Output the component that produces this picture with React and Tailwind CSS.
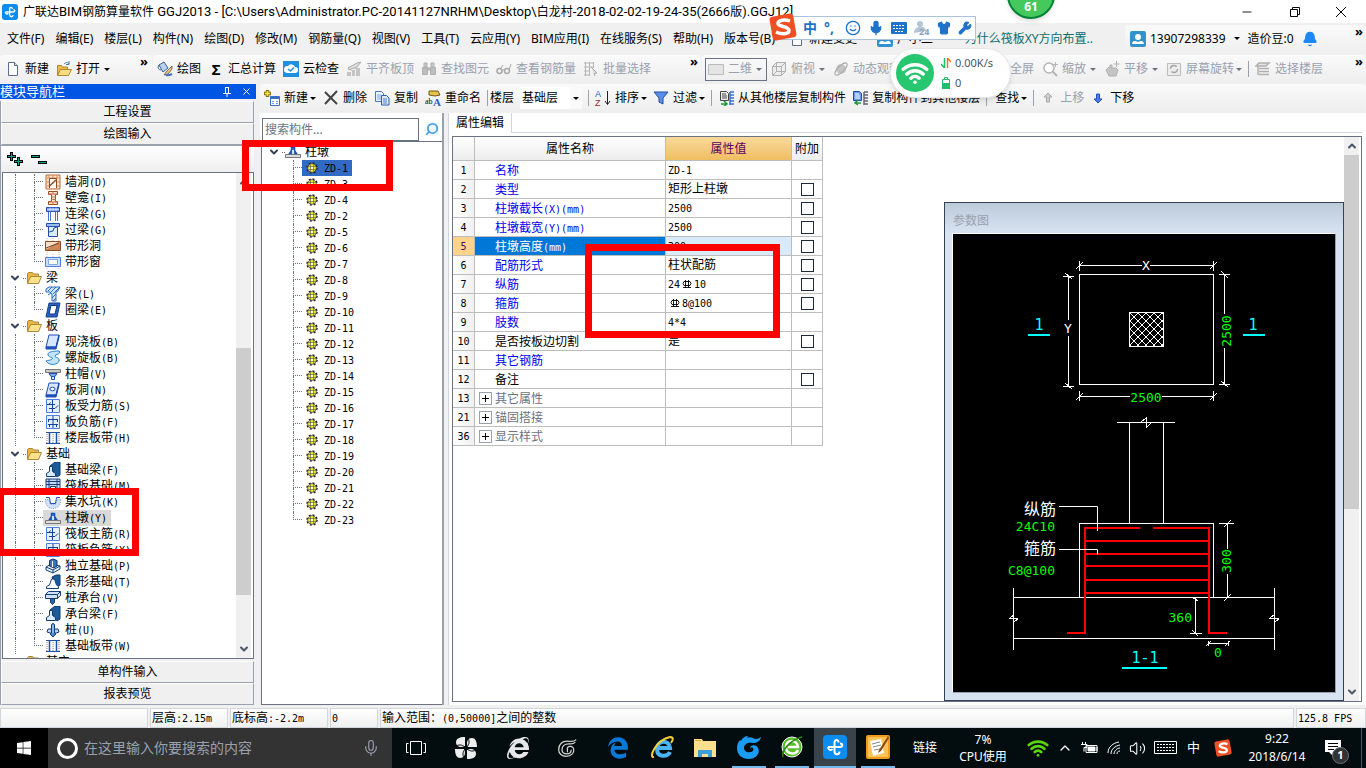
import React from 'react';
import { FaEdgeLegacy, FaInternetExplorer, FaWindows } from 'react-icons/fa';
import { Mic, Shirt, Wrench, Smile, Wifi, ChevronUp, ChevronDown, Minus, X, Bell, Volume2, Search } from 'lucide-react';

const navTree = [
  { label: '墙洞(D)', icon: 'wallHole' },
  { label: '壁龛(I)', icon: 'niche' },
  { label: '连梁(G)', icon: 'linkBeam' },
  { label: '过梁(G)', icon: 'lintel' },
  { label: '带形洞', icon: 'stripHole' },
  { label: '带形窗', icon: 'stripWindow', last: true },
  { label: '梁', group: true },
  { label: '梁(L)', icon: 'beam' },
  { label: '圈梁(E)', icon: 'ringBeam', last: true },
  { label: '板', group: true },
  { label: '现浇板(B)', icon: 'slab' },
  { label: '螺旋板(B)', icon: 'spiral' },
  { label: '柱帽(V)', icon: 'cap' },
  { label: '板洞(N)', icon: 'slabHole' },
  { label: '板受力筋(S)', icon: 'mainBar' },
  { label: '板负筋(F)', icon: 'negBar' },
  { label: '楼层板带(H)', icon: 'band', last: true },
  { label: '基础', group: true },
  { label: '基础梁(F)', icon: 'footBeam' },
  { label: '筏板基础(M)', icon: 'raft' },
  { label: '集水坑(K)', icon: 'sump' },
  { label: '柱墩(Y)', icon: 'pier', selected: true },
  { label: '筏板主筋(R)', icon: 'mainBar' },
  { label: '筏板负筋(X)', icon: 'negBar' },
  { label: '独立基础(P)', icon: 'isolated' },
  { label: '条形基础(T)', icon: 'stripFoot' },
  { label: '桩承台(V)', icon: 'pileCap' },
  { label: '承台梁(F)', icon: 'footBeam' },
  { label: '桩(U)', icon: 'pile' },
  { label: '基础板带(W)', icon: 'band', last: true },
  { label: '其它', group: true }
];

const components = [1, 3, 4, 2, 5, 6, 7, 8, 9, 10, 11, 12, 13, 14, 15, 16, 17, 18, 19, 20, 21, 22, 23];

const properties = [
  { no: 1, name: '名称', value: 'ZD-1' },
  { no: 2, name: '类型', value: '矩形上柱墩', check: true },
  { no: 3, name: '柱墩截长(X)(mm)', value: '2500', check: true },
  { no: 4, name: '柱墩截宽(Y)(mm)', value: '2500', check: true },
  { no: 5, name: '柱墩高度(mm)', value: '300', check: true, active: true },
  { no: 6, name: '配筋形式', value: '柱状配筋', check: true },
  { no: 7, name: '纵筋', value: '24', bar: '10', check: true },
  { no: 8, name: '箍筋', value: '', bar: '8@100', check: true },
  { no: 9, name: '肢数', value: '4*4' },
  { no: 10, name: '是否按板边切割', value: '是', check: true, tone: 'text-black' },
  { no: 11, name: '其它钢筋', value: '' },
  { no: 12, name: '备注', value: '', check: true, tone: 'text-black' },
  { no: 13, name: '其它属性', value: '', expand: true, tone: 'text-gray-500' },
  { no: 21, name: '锚固搭接', value: '', expand: true, tone: 'text-gray-500' },
  { no: 36, name: '显示样式', value: '', expand: true, tone: 'text-gray-500' }
];

const menus = ['文件(F)', '编辑(E)', '楼层(L)', '构件(N)', '绘图(D)', '修改(M)', '钢筋量(Q)', '视图(V)', '工具(T)', '云应用(Y)', 'BIM应用(I)', '在线服务(S)', '帮助(H)', '版本号(B)'];

const B = '#1b4fb5';

const glyphs = {
  wallHole: <><path d="M1 1h14v14H1z" fill="#fbe3cf" stroke="#b96a3a" /><path d="M1 4h14M1 8h3M12 8h3M1 12h3M12 12h3M4 1v3M8 1v3M12 1v3" stroke="#d98a55" /><path d="M4.500 14V4.500h7V14" fill="#fff" stroke="#8a4a22" /><path d="M4.500 12l6.500-6" stroke="#8a4a22" strokeWidth="1.500" /></>,
  niche: <><path d="M3.500 1.500h9v3h-2v7h2v3h-9v-3h3v-7h-3z" fill="#fde6d2" stroke="#9c4a1c" /><path d="M4 4h8M6 7h5M6 9.500h5M4 12h8M8 1.500v3M8 12v3" stroke="#c2703c" /></>,
  linkBeam: <><path d="M1.500 1.500h13v4h-13z" fill="#7ea6ee" stroke={B} /><path d="M2 3.500h12M5 1.500v4M8 1.500v4M11 1.500v4" stroke="#dfeaff" strokeWidth=".7" /><path d="M3.500 6v9M5.500 6v9M10.500 6v9M12.500 6v9" stroke={B} strokeWidth=".8" /></>,
  lintel: <><path d="M1.500 1.500h13v3h-13z" fill="#9cbcf5" stroke={B} /><path d="M3.500 4.500h9v10h-9z" fill="#dce9ff" stroke={B} /><path d="M4 10l4-1 1-3 3-1" stroke={B} fill="none" /></>,
  stripHole: <><path d="M2 0v16M8 0v3M14 0v16" stroke="#f2a8a0" strokeDasharray="1 1" /><path d="M.5 3.500h15v9H.5z" fill="#f6dfc9" stroke="#8a4a22" /><path d="M1 11c5-1 8-6 14-7v8H1z" fill="#c98a5a" /><path d="M1 10l13-5" stroke="#7b3f1c" /></>,
  stripWindow: <><path d="M2 0v16M8 0v3M14 0v16" stroke="#f2a8a0" strokeDasharray="1 1" /><path d="M.5 3.500h15v9H.5z" fill="#cddffb" stroke="#4a7be0" /><path d="M3.500 5.500h9v5h-9z" fill="#fff" stroke="#7ea6ee" /></>,
  beam: <><path d="M1 3l3-2h11l-2 4-2 1v9H7V8L5 6H1z" fill="#cfe6ff" stroke="#2c6cc0" /><path d="M3 5l4-4M6 6l5-5M8 8l7-7M7 12l4-4M8 15l3-3M3 9l3-2" stroke="#2c6cc0" /></>,
  ringBeam: <><path d="M4 1h11l-3 14H1z" fill="#2b62c4" stroke="#153f8c" /><path d="M6 3.500h6l-2 8.500H4z" fill="#fff" stroke="#0e347c" /></>,
  slab: <><path d="M4 1h10l-3 12H1z" fill="#d7e7ff" stroke={B} /><path d="M1 13v2h10l3-12V1l-3 12z" fill="#2457ba" stroke={B} /></>,
  spiral: <path d="M14 1C8 1 2 2 3 5s6 2 4 4-6 1-6 2c3 5 12 4 13 0s-4-3-4-5 4-1 5-4z" fill="#bfe4fb" stroke="#2a7fc6" />,
  cap: <><path d="M.5 3.500h15v3H.5z" fill="#c9c9c9" stroke="#777" /><path d="M4 7.500h8l-2 3H6z" fill="#7fa4ec" stroke={B} /><path d="M6.500 10.500h3v3h-3z" fill="#dfeaff" stroke={B} /></>,
  slabHole: <><path d="M4 1h10l-3 12H1z" fill="#d7e7ff" stroke={B} /><path d="M1 13v2h10l3-12V1l-3 12z" fill="#2457ba" stroke={B} /><ellipse cx="7.500" cy="7" rx="2.600" ry="1.800" fill="#fff" stroke={B} /></>,
  mainBar: <><path d="M1.500 1.500h13v13h-13z" fill="#e4efff" stroke="#4a80e0" /><path d="M7.500 2v12M2 6.500h8M13 7.500l-3 3H4M5.500 4.500L4 6.500" stroke="#143f9e" fill="none" /></>,
  negBar: <><path d="M1.500 1.500h13v13h-13z" fill="#e4efff" stroke="#4a80e0" /><path d="M3 5.500h10M3 10.500h10M8 2v12M3.500 5v3M12.500 5v3M4.500 10v3M11.500 10v3" stroke="#143f9e" fill="none" /></>,
  band: <><path d="M1 2.500h14M1 13.500h14" stroke="#1b4fb5" /><path d="M4.500 3v10M11.500 3v10" stroke="#1b4fb5" strokeWidth="1.500" /><path d="M2 4v9M8 4v9M14 4v9" stroke="#888" strokeDasharray="1 1" /></>,
  footBeam: <><path d="M5 4l5-4h5v13l-3 2z" fill="#1d5a9c" stroke="#0f3c70" /><path d="M1.500 14.500v-3l3-2v-5h3v5l3 2v3z" fill="#d9ecff" stroke="#0f3c70" /></>,
  raft: <><path d="M1 1h14v14H1z" fill="#c4daf8" stroke="#173f7a" /><path d="M1 3.500h14M1 6.500h14M4 1v14M12 1v14" stroke="#173f7a" /><path d="M5.500 8.500h5v6h-5z" fill="#fff" stroke="#173f7a" /></>,
  sump: <><path d="M0 5.500h4l1.500 5h5L12 5.500h4c0 5-3 9-8 9S0 10 0 5.500z" fill="#cfe1fb" stroke="#7ca0d8" strokeDasharray="1 1" /><path d="M1 3.500h3.500l1 6h5l1-6H15" fill="none" stroke={B} /></>,
  pier: <><path d="M6.500 3.500h3v3l2 3h-7l2-3z" fill="#3f7be0" stroke={B} strokeWidth="1.500" /><path d="M7 6h2v4H7z" fill="#cfe1fb" /><path d="M.5 10.500h15v3H.5z" fill="#ddd" stroke="#777" /></>,
  isolated: <><path d="M1 9l5-3 9 2v3l-7 4-7-3z" fill="#e6f2ff" stroke="#123f7c" /><path d="M1 9l7 3 7-4M8 12v3" stroke="#123f7c" fill="none" /><path d="M4.500 2.500L8 1l4 1.500V8l-3 2-4.500-2z" fill="#3a74b4" stroke="#0f376c" /><path d="M7.500 3v6" stroke="#fff" /></>,
  stripFoot: <><path d="M7 3l4-2h4v10l-4 3z" fill="#1d5a9c" stroke="#0f3c70" /><path d="M1.500 14.500v-2l3-1.500 2-6h3l2 6 2 1.500v2z" fill="#fff" stroke="#123f7c" /></>,
  pileCap: <><path d="M.5 4.500l3-3h12v4l-3 3H.5z" fill="#cfe1fb" stroke="#123f7c" /><path d="M.5 4.500h12v4M12.500 4.500l3-3" stroke="#123f7c" fill="none" /><path d="M5.500 8.500h4v4l-2 2-2-2z" fill="#2b62a8" stroke="#123f7c" /></>,
  pile: <><path d="M3 7h10l1 3-3 1H5l-3-1z" fill="#b9d6f5" stroke="#123f7c" /><path d="M6.500 3c0-2 3-2 3 0v8l1.500 1-3 3-3-3 1.500-1z" fill="#4a86cc" stroke="#123f7c" /><path d="M8 3v8" stroke="#fff" strokeWidth=".8" /></>,
  folder: <><path d="M1.500 13.500v-10l1-1h4l1 1.500h5v3" fill="#e8b84c" stroke="#a8883a" /><path d="M1.500 13.500l3-7h11l-3 7z" fill="#fde08a" stroke="#a8883a" /></>,
  newFile: <><path d="M3.500 1.500h6l3 3v10h-9z" fill="#fff" stroke="#5a6d8c" /><path d="M9.500 1.500v3h3" fill="#cddcf0" stroke="#5a6d8c" /></>,
  openFile: <><path d="M1.500 14.500v-10h4l1 1.500h5v2" fill="#e8b84c" stroke="#b08a30" /><path d="M1.500 14.500l3-6h11l-3 6z" fill="#fbdc83" stroke="#b08a30" /><path d="M8 3c2-2 4-2 5 0M13 0v3.500h-3" fill="none" stroke="#4a76b8" /></>,
  paint: <><path d="M2 4l5-3 4 6-5 4z" fill="#bdd2f0" stroke="#3a5f9a" /><path d="M2 4c-2 3 0 5 2 5" fill="none" stroke="#3a5f9a" /><path d="M15 5l-5 5-3 4 4-1 4-5z" fill="#f5c95a" stroke="#6d6a7a" /><path d="M9 14c2 1 4 0 6-1" stroke="#3c6fd0" strokeWidth="2" /></>,
  cloud: <><path d="M0 0h16v16H0z" fill="#1f8fe0" /><path d="M4 12h8a3 3 0 000-6 4 4 0 00-7-1 3.500 3.500 0 00-1 7z" fill="#fff" /><path d="M5 8l2.500 2L11 6.500" stroke="#1f8fe0" strokeWidth="1.500" fill="none" /></>,
  align: <><path d="M2 7l9-5 4-1-4 5-8 3z" fill="#ddd" stroke="#aaa" /><path d="M1 11h4V9h4V7h5v8H1z" fill="#c4c4c4" /><path d="M5.500 10v5M9.500 8v7" stroke="#f0f0f0" /></>,
  find: <><path d="M3 2h3v4H3zM10 2h3v4h-3z" fill="#c8c8c8" stroke="#b0b0b0" /><path d="M1.500 6.500h5v7h-5zM9.500 6.500h5v7h-5zM6 7h4v2H6z" fill="#bdbdbd" stroke="#b0b0b0" /></>,
  glasses: <><circle cx="3.500" cy="10" r="2.500" fill="none" stroke="#aaa" strokeWidth="1.500" /><circle cx="11" cy="10" r="2.500" fill="none" stroke="#aaa" strokeWidth="1.500" /><path d="M6 9h3M13 9l2-6M5 7l2-3" stroke="#aaa" /></>,
  batch: <><path d="M1 2h10M1 6h10M1 10h6M1 14h6M2.500 1v14M6.500 1v14M10.500 1v6" stroke="#b5b5b5" /><path d="M8 6l6 6-3 .5 1 2.500" fill="#ddd" stroke="#aaa" /></>,
  rect2d: <path d="M.5 3.500h15v10H.5z" fill="#e4e4e4" stroke="#bbb" />,
  cube: <path d="M1.500 5.500l4-4h9v9l-4 4h-9zM1.500 5.500h9v9M10.500 5.500l4-4M5.500 1.500v9h9M5.500 10.500l-4 4" fill="#ececec" stroke="#b0b0b0" />,
  orbit: <><circle cx="8" cy="8" r="5" fill="#c4c4c4" /><ellipse cx="8" cy="8" rx="8" ry="3" transform="rotate(-45 8 8)" fill="none" stroke="#aaa" /></>,
  zoom: <><circle cx="7" cy="7" r="5" fill="#fff" stroke="#b5b5b5" strokeWidth="1.500" /><path d="M10.500 10.500L15 15" stroke="#b5b5b5" strokeWidth="2" /><path d="M13.500 1v5M11 3.500h5" stroke="#b5b5b5" /></>,
  pan: <><path d="M2 9l3-3 1 1V4h2v3h4l2 2-2 6H5z" fill="#c4c4c4" stroke="#b0b0b0" /><path d="M12.500 0v6M9.500 3h6" stroke="#b0b0b0" /></>,
  rotate: <><path d="M1.500 2.500h13v12h-13z" fill="#ececec" stroke="#bbb" /><circle cx="8" cy="8" r="3.500" fill="none" stroke="#a5a5a5" strokeWidth="1.500" strokeDasharray="8 3" /></>,
  floors: <path d="M4 2h10l-3 3H1zM4 7.500h10M4 10.500h10M4 13.500h10M3 5v9" fill="#e4e4e4" stroke="#b0b0b0" strokeWidth="1.500" />,
  newComp: <><path d="M3.500 0v7M0 3.500h7" stroke="#8a7414" strokeWidth="3.500" /><path d="M3.500 1v5M1 3.500h5" stroke="#ffe14a" strokeWidth="1.500" /><path d="M6.500 6.500h9v9h-9z" fill="#fff" stroke="#3a70c4" /><path d="M7 8h8" stroke="#3a70c4" strokeWidth="2" /><path d="M8 11.500h2M12 11.500h2M8 13.500h2M12 13.500h2" stroke="#6f9be0" /></>,
  del: <path d="M2 2l12 12M14 1L2 14" stroke="#444" strokeWidth="2" />,
  copy: <><path d="M1.500 1.500h6l2 2v8h-8z" fill="#eaf2ff" stroke="#4a76c0" /><path d="M3 5h4M3 7h4M3 9h4" stroke="#7fa4dc" /><path d="M7.500 5.500h5l2.500 2.500v7H7.500z" fill="#dceaff" stroke="#2f5fb4" /><path d="M9 9h4M9 11h4M9 13h4" stroke="#4a80d8" /></>,
  filter: <path d="M1 2h14L10 8v6l-4-2V8z" fill="#5a8fe8" stroke="#1f4fa8" />,
  fromFloor: <><path d="M2.500 1.500h6l2 2v7h-8z" fill="#eee" stroke="#444" /><path d="M4 4h4M4 6h5M4 8h5" stroke="#444" /><path d="M12 2h4M12 5h4M12 8h4M12 11h4M12 14h4M12 2v13" stroke="#3a70d0" strokeWidth="1.500" /><path d="M3 14h5M6 11l3 3-3 2" stroke="#1b9a3a" strokeWidth="1.500" fill="none" /></>,
  toFloor: <><path d="M1.500 1.500h6l2 2v7h-8z" fill="#6b9bf0" stroke="#234c9c" /><path d="M3 4h4M3 6h5M3 8h5" stroke="#fff" /><path d="M12 2h4M12 5h4M12 8h4M12 11h4M12 14h4M12 2v13" stroke="#667" strokeWidth="1.500" /><path d="M9 13H4M6 10l-3 3 3 2" stroke="#1b9a3a" strokeWidth="1.500" fill="none" /></>,
  up: <path d="M8 3l4 4H9.500v5h-3V7H4z" fill="#ccc" stroke="#aaa" />,
  down: <path d="M8 13l4-4H9.500V4h-3v5H4z" fill="#4a7df0" stroke="#2450b8" />,
  gear: <><circle cx="8" cy="8" r="5" stroke="#222" strokeWidth="1.500" strokeDasharray="1.960 1.960" /><circle cx="8" cy="8" r="4.300" fill="#f6f02a" stroke="#444" strokeWidth=".8" /><path d="M6.500 4v8M9.500 4v8M4 6.500h8M4 9.500h8" stroke="#555" strokeWidth=".6" /><path d="M7 7h2v2H7z" fill="#fff" /></>,
  user: <><rect width="16" height="16" rx="2" fill="#3292cc" /><circle cx="8" cy="6" r="3" fill="#fff" /><path d="M2 13c1-4 3-3 6-2 3-1 5-2 6 2z" fill="#fff" /></>
};

const Ico = ({ name, className = 'h-4 w-4' }) => (
  <svg viewBox="0 0 16 16" fill="none" className={`shrink-0 ${className}`} aria-hidden="true">{glyphs[name]}</svg>
);

// Latin runs get their own face and size, CJK keeps the surrounding one
const Mixed = ({ text, latin }) => (
  <span className="whitespace-pre">
    {text.split(/([\x20-\x7e]+)/).filter(Boolean).map((part, i) =>
      /[\x20-\x7e]/.test(part) ? <span key={i} className={latin}>{part}</span> : part
    )}
  </span>
);

const Song = ({ text }) => <Mixed text={text} latin="font-['DejaVu_Sans_Mono',monospace] text-[10px] leading-none" />;

const Caret = ({ className = 'text-black' }) => (
  <svg viewBox="0 0 6 3" className={`h-[3px] w-[6px] shrink-0 ${className}`} fill="currentColor" aria-hidden="true"><path d="M0 0h6L3 3z" /></svg>
);

const ToolButton = ({ icon, label, caret, dim, tight, children }) => (
  <button type="button" className={`flex shrink-0 items-center gap-1 whitespace-nowrap ${dim ? 'text-gray-400' : 'text-black'}`}>
    {children || (icon && <Ico name={icon} />)}
    {label}
    {caret && <Caret className={`${tight ? '-ml-0.5' : ''} ${dim ? 'text-gray-500' : 'text-black'}`} />}
  </button>
);

const More = () => <button type="button" className="mb-4 text-[13px] leading-4 font-bold text-black" aria-label="更多">»</button>;
const Sep = () => <span className="h-4 w-px shrink-0 bg-gray-400" />;

const AppLogo = ({ className }) => (
  <svg viewBox="0 0 24 24" className={className} fill="none" aria-hidden="true">
    <rect width="24" height="24" rx="4" fill="#0a8cf0" />
    <path d="M15.500 7.500c0-3-4-3.500-4 0v9c0 3.500 5 3.500 5 0M5 12h12c3 0 3-3.500 0-3.500M5 12c0 3 3 4 4.500 2" stroke="#fff" strokeWidth="2" />
  </svg>
);

const SogouLogo = ({ className }) => (
  <svg viewBox="0 0 28 28" className={className} aria-hidden="true">
    <rect x="2" y="2" width="24" height="24" rx="3" fill="#f04e23" transform="rotate(-10 14 14)" />
    <path d="M21 8c-5-2-12-1-12 2.500S20 13 20 17.500 11 21 7 19" fill="none" stroke="#fff" strokeWidth="3.500" />
  </svg>
);

function TitleBar() {
  return (
    <header className="flex h-[23px] shrink-0 items-center bg-white pl-0.5">
      <AppLogo className="h-4 w-4" />
      <h1 className="ml-[5px] flex-1 text-xs"><Mixed text="广联达BIM钢筋算量软件 GGJ2013 - [C:\Users\Administrator.PC-20141127NRHM\Desktop\白龙村-2018-02-02-19-24-35(2666版).GGJ12]" latin="font-['Roboto',sans-serif] text-[13px] leading-none" /></h1>
      <div className="flex items-center gap-9 pr-5">
        <button type="button" aria-label="最小化"><Minus className="h-[14px] w-[14px]" strokeWidth={1.500} /></button>
        <button type="button" aria-label="还原">
          <svg viewBox="0 0 10 10" className="h-[10px] w-[10px]" fill="none" stroke="#000"><path d="M.5 2.500h7v7h-7zM2.500 2.500v-2h7v7h-2" /></svg>
        </button>
        <button type="button" aria-label="关闭">
          <svg viewBox="0 0 10 10" className="h-[10px] w-[10px]" fill="none" stroke="#000"><path d="M0 0l10 10M10 0L0 10" /></svg>
        </button>
      </div>
    </header>
  );
}

function MenuBar() {
  return (
    <div className="flex h-[31px] shrink-0 items-center bg-[#f0f0f0] text-xs">
      <nav className="flex items-center gap-[11px] pl-[7px]">
        {menus.map((m) => <button type="button" key={m} className="whitespace-nowrap">{m}</button>)}
      </nav>
      <div className="ml-3.5 flex h-full flex-1 items-center justify-between">
        <div className="flex items-center gap-5">
          <ToolButton icon="newFile" label="新建变更" />
          <ToolButton icon="user" label="广小二" />
        </div>
        <a href="#help" className="pr-8 whitespace-nowrap text-[#0a6e6e]">为什么筏板XY方向布置..</a>
      </div>
      <div className="flex h-7 w-[241px] items-center rounded bg-linear-to-b from-[#fafafa] to-[#efefef] pr-[3px] pl-[5px]">
        <button type="button" className="flex items-center gap-1"><Ico name="user" />13907298339<span className="ml-1"><Caret /></span></button>
        <span className="ml-2">造价豆:0</span>
        <Bell className="ml-2 h-4 w-4 fill-[#1e88f5] text-[#1e88f5]" />
        <span className="ml-auto"><More /></span>
      </div>
    </div>
  );
}

const strip = 'flex h-7 items-center rounded bg-linear-to-b from-[#fafafa] to-[#eeeeee]';

function MainToolbar() {
  return (
    <div className="flex h-[30px] shrink-0 items-center gap-px bg-[#f0f0f0] text-xs">
      <div className={`${strip} w-[152px] gap-[7px] pr-1 pl-[5px]`}>
        <ToolButton icon="newFile" label="新建" />
        <ToolButton icon="openFile" label="打开" caret />
        <span className="ml-auto"><More /></span>
      </div>
      <div className={`${strip} w-[548px] gap-[7px] pr-[3px] pl-1`}>
        <ToolButton icon="paint" label="绘图" />
        <ToolButton label="汇总计算"><span className="w-4 text-center text-[15px] font-bold">Σ</span></ToolButton>
        <ToolButton icon="cloud" label="云检查" />
        <ToolButton icon="align" label="平齐板顶" dim />
        <ToolButton icon="find" label="查找图元" dim />
        <ToolButton icon="glasses" label="查看钢筋量" dim />
        <ToolButton icon="batch" label="批量选择" dim />
        <span className="ml-auto"><More /></span>
      </div>
      <div className={`${strip} flex-1 gap-2 pr-[3px] pl-[3px]`}>
        <label className="-mr-1 flex h-[23px] w-[62px] shrink-0 items-center border border-gray-500 pr-1 pl-0.5 text-gray-400">
          <Ico name="rect2d" />
          <select aria-label="视图模式" className="ml-1 w-[31px] appearance-none bg-transparent"><option>二维</option></select>
          <Caret className="text-gray-500" />
        </label>
        <ToolButton icon="cube" label="俯视" caret dim />
        <ToolButton icon="orbit" label="动态观察" dim />
        <span className="ml-auto"><ToolButton label="全屏" dim /></span>
        <ToolButton icon="zoom" label="缩放" caret dim />
        <ToolButton icon="pan" label="平移" caret dim />
        <div className="mr-6 flex items-center gap-1.5">
          <ToolButton icon="rotate" label="屏幕旋转" caret dim tight />
          <Sep />
          <ToolButton icon="floors" label="选择楼层" dim />
        </div>
        <More />
      </div>
    </div>
  );
}

function ScrollBar({ thumb }) {
  return (
    <div className="flex w-[15px] shrink-0 flex-col items-center bg-[#f0f0f0] text-gray-600">
      <span className="flex h-[18px] items-center"><ChevronUp className="h-3 w-3" strokeWidth={4} /></span>
      <div className="relative w-full flex-1"><div className={`absolute w-full bg-[#cdcdcd] ${thumb}`} /></div>
      <span className="flex h-[18px] items-center"><ChevronDown className="h-3 w-3" strokeWidth={4} /></span>
    </div>
  );
}

const dots = 'border-dotted border-gray-500';

function NavRow({ item }) {
  if (item.group) {
    return (
      <li className="flex h-4 items-center pl-1.5">
        <ChevronDown className="h-3 w-3 text-gray-700" strokeWidth={4} />
        <span className={`ml-0.5 w-[3px] border-t ${dots}`} />
        <button type="button" className="flex h-4 items-center gap-1"><Ico name="folder" /><Song text={item.label} /></button>
      </li>
    );
  }
  return (
    <li className="flex h-4 items-center pl-3">
      <span className={`h-4 w-[19px] border-l ${dots}`} />
      <span className="flex w-[9px] flex-col">
        <span className={`h-2 border-b border-l ${dots}`} />
        <span className={`h-2 ${item.last ? '' : `border-l ${dots}`}`} />
      </span>
      <button type="button" className={`flex h-4 items-center gap-1 pr-1 pl-0.5 ${item.selected ? 'bg-[#d9d9d9]' : ''}`}>
        <Ico name={item.icon} /><Song text={item.label} />
      </button>
    </li>
  );
}

const navBtn = 'h-[22px] w-full shrink-0 border border-t-white border-r-gray-400 border-b-gray-400 border-l-white bg-[#f0f0f0] text-center text-xs';

function NavPanel() {
  return (
    <aside className="flex w-64 shrink-0 flex-col overflow-hidden pb-[3px]">
      <div className="flex h-[15px] shrink-0 items-center bg-[#0055e5] text-white">
        <h2 className="flex-1 text-[13px] leading-[15px]">模块导航栏</h2>
        <svg viewBox="0 0 8 10" className="mr-2.5 h-[10px] w-2" fill="none" stroke="#fff" aria-hidden="true"><path d="M2.500 1v5M5.500 1v5M2 .5h4M0 6.500h8M4 6v4" /></svg>
        <X className="mr-1 h-[11px] w-[11px]" />
      </div>
      <div className="mt-0.5 mr-0.5 flex min-h-0 flex-1 flex-col border-l border-gray-400">
        <button type="button" className={navBtn}>工程设置</button>
        <button type="button" className={navBtn}>绘图输入</button>
        <div className="flex h-[27px] shrink-0 items-center gap-2 border-t border-gray-400 bg-linear-to-b from-white to-[#eeeeee] pl-1.5">
          <button type="button" aria-label="全部展开">
            <svg viewBox="0 0 16 14" className="h-[14px] w-4" fill="none"><path d="M4.500 0v9M0 4.500h9M11.500 5v9M7 9.500h9" stroke="#000" strokeWidth="3" /><path d="M4.500 1v7M1 4.500h7M11.500 6v7M8 9.500h7" stroke="#0aa08c" /></svg>
          </button>
          <button type="button" aria-label="全部折叠">
            <svg viewBox="0 0 16 14" className="h-[14px] w-4" fill="none"><path d="M0 4.500h9M7 10.500h9" stroke="#000" strokeWidth="3" /><path d="M1 4.500h7M8 10.500h7" stroke="#0aa08c" /></svg>
          </button>
        </div>
        <div className="ml-px flex min-h-0 flex-1 overflow-hidden border border-gray-500 bg-white pr-0.5">
          <ul className="min-w-0 flex-1 overflow-hidden pt-px text-xs leading-4">
            {navTree.map((item, i) => <NavRow key={i} item={item} />)}
          </ul>
          <ScrollBar thumb="top-[35%] h-[55%]" />
        </div>
        <button type="button" className={`${navBtn} mt-0.5`}>单构件输入</button>
        <button type="button" className={navBtn}>报表预览</button>
      </div>
    </aside>
  );
}

function ComponentToolbar() {
  return (
    <div className={`${strip} w-full shrink-0 gap-1.5 pl-1 text-xs`}>
      <div className="flex items-center gap-[7px]">
        <ToolButton icon="newComp" label="新建" caret tight />
        <ToolButton icon="del" label="删除" />
        <ToolButton icon="copy" label="复制" />
        <ToolButton label="重命名">
          <svg viewBox="0 0 16 16" className="h-4 w-4" aria-hidden="true"><path d="M4 1h9l2 4-5 1-6-1z" fill="#e8c34a" stroke="#6a5a1a" /><text x="0" y="14" fontSize="8" fontFamily="Liberation Serif">ab</text><text x="8" y="16" fontSize="11" fontWeight="bold" fill="#2a5fc8" fontFamily="Liberation Serif">A</text></svg>
        </ToolButton>
      </div>
      <Sep />
      <div className="-ml-1 flex items-center">
        <label htmlFor="floor">楼层</label>
        <select id="floor" className="ml-1.5 h-[22px] w-[50px] appearance-none bg-white pl-0.5"><option>基础层</option></select>
        <span className="flex h-[22px] w-3 items-center justify-center bg-[#fafafa]"><Caret /></span>
      </div>
      <Sep />
      <ToolButton label="排序" caret tight>
        <svg viewBox="0 0 16 16" className="h-4 w-4" fill="none" aria-hidden="true"><text x="0" y="7" fontSize="9" fill="#2a5fc8" fontFamily="Liberation Sans">A</text><text x="0" y="16" fontSize="9" fill="#a02828" fontFamily="Liberation Sans">Z</text><path d="M12.500 1v13M10 11l2.500 3.500L15 11" stroke="#222" /></svg>
      </ToolButton>
      <ToolButton icon="filter" label="过滤" caret tight />
      <Sep />
      <ToolButton icon="fromFloor" label="从其他楼层复制构件" />
      <ToolButton icon="toFloor" label="复制构件到其他楼层" />
      <Sep />
      <div className="ml-0.5 flex items-center gap-1.5">
        <ToolButton label="查找" caret tight />
        <Sep />
        <ToolButton icon="up" label="上移" dim />
        <ToolButton icon="down" label="下移" />
      </div>
    </div>
  );
}

function ComponentList() {
  return (
    <section className="mr-1 flex w-[184px] shrink-0 flex-col border-r-2 border-gray-400">
      <div className="flex h-7 shrink-0 items-center bg-white pt-1 pl-0.5">
        <input type="text" aria-label="搜索构件" placeholder="搜索构件..." className="h-[23px] w-[157px] border border-gray-500 bg-white pl-0.5 text-xs placeholder:text-gray-500" />
        <button type="button" className="ml-1.5 bg-sky-50" aria-label="搜索"><Search className="h-[14px] w-[14px] -scale-x-100 text-[#4a9fe0]" strokeWidth={3} /></button>
      </div>
      <div className="ml-px flex-1 overflow-hidden border border-r-0 border-gray-500 bg-white pt-0.5 pl-1.5 text-xs leading-4">
        <div className="flex h-4 items-center">
          <ChevronDown className="h-3 w-3 text-gray-700" strokeWidth={4} />
          <span className={`ml-0.5 w-[3px] border-t ${dots}`} />
          <Ico name="pier" /><span className="ml-1">柱墩</span>
        </div>
        <ul>
          {components.map((n, i) => (
            <li key={n} className="flex h-4 items-center pl-[25px]">
              <span className="flex w-[9px] flex-col">
                <span className={`h-2 border-b border-l ${dots}`} />
                <span className={`h-2 ${i === components.length - 1 ? '' : `border-l ${dots}`}`} />
              </span>
              <button type="button" className={`flex h-4 items-center gap-1 pr-1 pl-0.5 ${n === 1 ? 'bg-[#316ac5]' : ''}`}>
                <Ico name="gear" /><Song text={`ZD-${n}`} />
              </button>
            </li>
          ))}
        </ul>
      </div>
    </section>
  );
}

const RebarMark = () => (
  <svg viewBox="0 0 10 10" className="mx-0.5 h-[10px] w-[10px]" fill="none" stroke="#000" aria-hidden="true"><path d="M2 2.500h6l1 2-1 2H2l-1-2zM3.500 1v8M6.500 1v8M1 8.500h8" strokeWidth=".9" /></svg>
);

const cell = 'border-r border-b border-[#bdbdbd]';

function PropertyTable() {
  return (
    <table className="h-fit w-[370px] shrink-0 table-fixed border-separate border-spacing-0 text-xs leading-[18px]">
      <colgroup><col className="w-[22px]" /><col className="w-[191px]" /><col className="w-[126px]" /><col className="w-[31px]" /></colgroup>
      <thead>
        <tr className="h-6 bg-linear-to-b from-white to-[#ececec]">
          <th className={cell}><span className="sr-only">序号</span></th>
          <th className={`${cell} font-normal`}>属性名称</th>
          <th className={`${cell} bg-linear-to-b from-[#f9d99a] to-[#f0be60] font-normal text-[#5c0060]`}>属性值</th>
          <th className={`${cell} font-normal`}>附加</th>
        </tr>
      </thead>
      <tbody>
        {properties.map((p) => (
          <tr key={p.no} className="h-[19px]">
            <td className={`${cell} p-0 ${p.active ? 'bg-[#ffd48a] text-[#5c0060]' : 'bg-linear-to-r from-white to-[#f0f0f0]'}`}><div className="flex h-[18px] items-center justify-center"><Song text={String(p.no)} /></div></td>
            <td className={`${cell} p-0 ${p.active ? 'bg-[#0078d7] text-white' : p.tone || 'text-[#0000ee]'}`}>
              <div className="flex h-[18px] items-center pt-px">
                <span className="flex w-5 justify-center">
                  {p.expand && <button type="button" aria-label="展开" className="flex h-[13px] w-[13px] items-center justify-center border border-gray-400 text-black"><svg viewBox="0 0 7 7" className="h-[7px] w-[7px]" stroke="currentColor"><path d="M3.500 0v7M0 3.500h7" /></svg></button>}
                </span>
                <Song text={p.name} />
              </div>
            </td>
            <td className={`${cell} p-0 pl-0.5 ${p.active ? 'bg-[#d9eaf8]' : ''}`}>
              <div className="flex h-[18px] items-center"><Song text={p.value} />{p.bar && <><RebarMark /><Song text={p.bar} /></>}</div>
            </td>
            <td className={`${cell} p-0`}>
              {p.check && <input type="checkbox" aria-label={`附加 ${p.name}`} className="mx-auto block h-[13px] w-[13px] appearance-none border border-gray-800 bg-white" />}
            </td>
          </tr>
        ))}
      </tbody>
    </table>
  );
}

function SectionDrawing() {
  return (
    <svg viewBox="953 234 382 458" className="block h-full w-full bg-black" fill="none" fontFamily="'DejaVu Sans Mono', 'Noto Sans CJK SC', monospace" fontSize="13">
      <defs>
        <pattern id="hatch" width="8" height="8" patternUnits="userSpaceOnUse" x="1130" y="313"><path d="M0 0l8 8M8 0L0 8" stroke="#fff" /></pattern>
      </defs>
      <g stroke="#fff" shapeRendering="crispEdges">
        <path d="M1079.500 274.500h134v110h-134z" />
        <path d="M1129.500 312.500h34v34h-34z" fill="url(#hatch)" />
        <path d="M1079 265.500h63M1150 265.500h64M1079.500 261v10M1213.500 261v10M1076 269l7-7M1210 269l7-7" />
        <path d="M1079 396.500h51M1162 396.500h52M1079.500 391v10M1213.500 391v10M1076 400l7-7M1210 400l7-7" />
        <path d="M1068.500 276v44M1068.500 336v50M1063 276.500h11M1063 386.500h11M1065 273l7 6M1065 383l7 6" />
        <path d="M1224.500 274v40M1224.500 348v36M1219 274.500h11M1219 384.500h11M1221 271l7 7M1221 381l7 6" />
        <path d="M1117 422.500h58M1141 422l5-4v10l5-5M1129.500 423v100M1163.500 423v100" />
        <path d="M1079.500 597v-73.500h134V597M1013 597.500h261M1013 638.500h261" />
        <path d="M1013.500 588v62M1009 618.500h9M1010 618l4-3M1014 622l4-3M1274.500 588v62M1269 618.500h10M1270 618l4-3M1275 622l4-3" />
        <path d="M1227.500 523v26M1227.500 574v24M1219 523.500h15M1224 527l7-7M1224 601l7-7" />
        <path d="M1195.500 598v35M1190 633.500h12M1192 597l6 4M1192 630l6 6M1208 643.500h20M1208.500 641v5M1228.500 641v5M1206 646l5-5M1225 646l5-5" />
      </g>
      <g stroke="#f00" strokeWidth="2" shapeRendering="crispEdges">
        <path d="M1140 528h-55v105h-18M1153 528h56v105h18" />
        <path d="M1085 541h124M1085 554h124M1085 566h124M1085 580h124M1085 593h124" />
      </g>
      <path d="M1059 506.500h38.500V531M1059 549.500h38.500v5" stroke="#fff" />
      <path d="M1028 335h22M1243 335h22M1122 668h45" stroke="#0ff" strokeWidth="2" />
      <g fill="#fff">
        <text x="1146" y="270" textAnchor="middle">X</text>
        <text x="1068" y="333" textAnchor="middle">Y</text>
        <text x="1024" y="515" fontSize="16">纵筋</text>
        <text x="1024" y="554" fontSize="16">箍筋</text>
      </g>
      <g fill="#0f0">
        <text x="1146" y="402" textAnchor="middle">2500</text>
        <text transform="translate(1231 331) rotate(-90)" textAnchor="middle">2500</text>
        <text transform="translate(1231 561) rotate(-90)" textAnchor="middle">300</text>
        <text x="1055" y="531" textAnchor="end">24C10</text>
        <text x="1055" y="575" textAnchor="end">C8@100</text>
        <text x="1192" y="622" textAnchor="end">360</text>
        <text x="1218" y="657" textAnchor="middle">0</text>
      </g>
      <g fill="#0ff" textAnchor="middle" fontSize="15">
        <text x="1039" y="330">1</text>
        <text x="1253" y="330">1</text>
        <text x="1145" y="663">1-1</text>
      </g>
    </svg>
  );
}

function PropertyPanel() {
  return (
    <section className="flex min-w-0 flex-1 flex-col border-l border-gray-300 bg-white pr-1 pb-[3px]">
      <div className="flex h-5 shrink-0">
        <button type="button" role="tab" aria-selected="true" className="w-[63px] border-r border-gray-300 text-center text-xs">属性编辑</button>
        <span className="flex-1 border-b border-gray-300" />
      </div>
      <div className="relative mt-[3px] ml-[3px] flex min-h-0 flex-1 justify-between border border-gray-500 bg-white pr-0.5">
        <PropertyTable />
        <ScrollBar thumb="top-0 h-[67%]" />
        <div className="absolute right-[17px] bottom-0 flex h-[499px] w-[400px] flex-col border border-gray-700 bg-[#d7e3f1]">
          <h3 className="h-[30px] shrink-0 bg-linear-to-b from-[#bccbda] to-[#d7e3f1] pt-2.5 pl-2 text-xs text-gray-400">参数图</h3>
          <div className="mx-[7px] mb-[7px] min-h-0 flex-1 border border-t-white border-r-gray-400 border-b-gray-400 border-l-white"><SectionDrawing /></div>
        </div>
      </div>
    </section>
  );
}

const statusCell = 'flex h-full items-center border border-gray-300 bg-linear-to-b from-white to-[#f0f0f0] pl-px';

function StatusBar() {
  return (
    <footer className="flex h-5 shrink-0 gap-0.5 bg-[#f0f0f0] text-xs">
      <div className={`${statusCell} w-[148px]`} />
      <div className={`${statusCell} w-[78px]`}><Song text="层高:2.15m" /></div>
      <div className={`${statusCell} w-[98px]`}><Song text="底标高:-2.2m" /></div>
      <div className={`${statusCell} w-12`}><Song text="0" /></div>
      <div className={`${statusCell} flex-1`}><Song text="输入范围：(0,50000]之间的整数" /></div>
      <div className={`${statusCell} w-[70px]`}><Song text="125.8 FPS" /></div>
    </footer>
  );
}

function Taskbar() {
  const slot = 'flex h-full shrink-0 items-center justify-center';
  return (
    <div className="flex h-10 shrink-0 items-center bg-[#030d10] text-xs text-white">
      <button type="button" className={`${slot} w-12 bg-black`} aria-label="开始"><FaWindows className="h-4 w-4" /></button>
      <label className="flex h-full w-[344px] items-center bg-[#333333] pr-3 pl-[9px]">
        <span className="h-[21px] w-[21px] shrink-0 rounded-full border-[3px] border-white" />
        <input type="text" aria-label="搜索" placeholder="在这里输入你要搜索的内容" className="ml-1.5 min-w-0 flex-1 bg-transparent text-sm placeholder:text-gray-400" />
        <Mic className="h-[18px] w-[18px] text-gray-400" strokeWidth={1.500} />
      </label>
      <button type="button" className={`${slot} w-12`} aria-label="任务视图">
        <svg viewBox="0 0 22 16" className="h-4 w-[22px]" fill="none" stroke="#fff"><path d="M5.500 1.500h11v13h-11zM3.500 3.500h-2v9h2M18.500 3.500h2v9h-2" /></svg>
      </button>
      <button type="button" className={`${slot} w-[52px]`} aria-label="风扇">
        <svg viewBox="0 0 22 22" className="h-[22px] w-[22px]" fill="#eee">
          <path d="M10 0v9c-4 2-9 1-9-4 0-3 3-5 9-5zM22 10h-9c-2-4-1-9 4-9 3 0 5 3 5 9zM12 22v-9c4-2 9-1 9 4 0 3-3 5-9 5zM0 12h9c2 4 1 9-4 9-3 0-5-3-5-9z" />
          <path d="M1 9c4-2 7-1 10 2M13 1c2 4 1 7-2 10M21 13c-4 2-7 1-10-2M9 21c-2-4-1-7 2-10" stroke="#030d10" fill="none" />
        </svg>
      </button>
      <button type="button" className={`${slot} w-[52px]`} aria-label="浏览器"><FaInternetExplorer className="h-[22px] w-[22px] text-gray-200" /></button>
      <button type="button" className={`${slot} w-[46px]`} aria-label="广联达">
        <svg viewBox="0 0 24 24" className="h-5 w-5" fill="none" stroke="#d4d4d4" strokeWidth="1.500">
          <path d="M23 2c-3 3-6 2-9 2C6 3 2 8 2 14c0 5 4 8 9 8 6 0 10-4 9-9-1-3-5-4-7-2-2 3 1 5-1 6" />
          <path d="M22 5c-3 3-5 2-8 2-5 0-8 3-8 7s3 5 6 5c4 0 5-3 5-5" />
        </svg>
      </button>
      <button type="button" className={`${slot} w-14`} aria-label="Edge"><FaEdgeLegacy className="h-[22px] w-[22px] text-[#0a78d7]" /></button>
      <button type="button" className={`${slot} w-8`} aria-label="IE">
        <svg viewBox="0 0 24 24" className="h-6 w-6" fill="none"><path d="M20 16c-2 5-13 6-13-3s12-10 13-1H9" stroke="#4bb4f5" strokeWidth="4" /><path d="M4 21C-2 22 6 4 20 1c4 0 3 3 1 6" stroke="#f5cf3a" strokeWidth="2" /></svg>
      </button>
      <button type="button" className={`${slot} w-[54px]`} aria-label="文件资源管理器">
        <svg viewBox="0 0 22 18" className="h-[18px] w-[22px]"><path d="M0 0h8l1 2h13v16H0z" fill="#fbdf8c" /><path d="M1 1h6v1H1z" fill="#e8a92a" /><path d="M4 18v-7h14v7h-4v-3H8v3z" fill="#3aa0dc" /></svg>
      </button>
      <button type="button" className={`${slot} w-[34px] border-b-2 border-[#76b9ed]`} aria-label="广联达云">
        <svg viewBox="0 0 24 24" className="h-6 w-6" fill="#1a9cf2">
          <path d="M24 2c-1 4-4 6-8 6-5-1-9 1-9 5 0 3 3 5 6 4 3 0 4-2 3-4-1-1-2-1-3 0 0-3 6-4 8 0 3 6-3 11-9 11C5 24 0 20 0 13c0-3 1-6 3-8l1 1c1-3 4-5 7-5l-1 2c4-2 6 1 9 1 2 0 3-1 5-2z" />
        </svg>
      </button>
      <button type="button" className={`${slot} ml-[9px] w-[34px] border-b-2 border-[#76b9ed]`} aria-label="360浏览器">
        <svg viewBox="0 0 24 24" className="h-6 w-6" fill="none"><circle cx="12" cy="12" r="10" fill="#5abf2a" stroke="#fff" /><path d="M18 15c-2 5-12 5-12-3s11-8 12 0H8" stroke="#fff" strokeWidth="2.500" /><path d="M3 22C1 16 10 5 22 2" stroke="#2d8a1a" strokeWidth="1.500" /></svg>
      </button>
      <button type="button" className={`${slot} ml-[5px] w-[42px] border-b-2 border-[#76b9ed] bg-[#39434a]`} aria-label="GGJ2013"><AppLogo className="h-6 w-6" /></button>
      <button type="button" className={`${slot} ml-[5px] w-[34px] border-b-2 border-[#76b9ed]`} aria-label="便笺">
        <svg viewBox="0 0 24 24" className="h-6 w-6"><rect width="24" height="24" rx="2" fill="#f29a1c" /><path d="M2 2h20v20H2z" fill="#fbc355" /><path d="M4 6l11-2 3 14-11 3z" fill="#fff" /><path d="M6 9l8-2M7 12l8-2M8 15l6-1" stroke="#888" /><path d="M22 1l-9 14-1 3 3-2 8-13z" fill="#8a4a12" /></svg>
      </button>
      <span className="ml-auto w-[46px] whitespace-nowrap">链接</span>
      <span className="w-12 text-center leading-[17px] whitespace-nowrap">7%<br />CPU使用</span>
      <div className="ml-5 flex items-center">
        <Wifi className="h-[22px] w-[22px] text-[#57d80a]" strokeWidth={3} />
        <ChevronUp className="ml-2 h-4 w-4" />
        <svg viewBox="0 0 18 12" className="ml-2 h-3 w-[18px]" fill="none" stroke="#fff"><path d="M5 3.500h11v7H5zM16 5v4M0 2.500h6v3H3v4M1.500 0v2M4.500 0v2" /><path d="M7 5h7v4H7z" fill="#fff" /></svg>
        <svg viewBox="0 0 14 14" className="ml-2 h-[14px] w-[14px]" fill="none" stroke="#fff"><path d="M1 12C1 6 6 2 12 1M4 13c0-5 4-8 9-9M7 13c0-3 3-6 6-6M10 13c0-2 1-3 3-3" /></svg>
        <Volume2 className="ml-2 h-[17px] w-[17px]" strokeWidth={1.500} />
        <svg viewBox="0 0 23 14" className="ml-2 h-[14px] w-[23px]" fill="none" stroke="#fff"><path d="M.5.5h22v12H.5z" /><path d="M3 3.500h17M3 6.500h17M3 9.500h2M6 9.500h11M18 9.500h2" strokeDasharray="2 1" /></svg>
        <span className="ml-2.5 text-[13px]">中</span>
        <SogouLogo className="ml-3.5 h-[18px] w-[18px]" />
      </div>
      <div className="ml-3.5 w-[62px] text-center leading-[18px] whitespace-nowrap">9:22<br />2018/6/14</div>
      <button type="button" className="relative ml-[17px] h-full w-9" aria-label="通知">
        <svg viewBox="0 0 16 16" className="h-4 w-4" fill="#fff"><path d="M0 0h16v12H8v4l-4-4H0z" /><path d="M3 3.500h10M3 6.500h10M3 9.500h6" stroke="#000" /></svg>
        <span className="absolute top-[19px] left-[7px] flex h-[17px] w-[17px] items-center justify-center rounded-full border border-gray-500 bg-[#333] text-[11px] font-bold">1</span>
      </button>
      <span className="h-full w-[5px] border-l border-gray-600" />
    </div>
  );
}

function ImeBar() {
  return (
    <div className="absolute top-4 left-[780px] flex h-6 w-[196px] items-center gap-[7px] border border-[#a9c4dc] bg-white pl-6 text-[#1f72c8]">
      <SogouLogo className="absolute -top-1 -left-3 h-7 w-7" />
      <b className="-ml-0.5 text-sm leading-5">中</b>
      <b className="w-[14px] text-sm leading-5">°,</b>
      <Smile className="h-4 w-4" />
      <Mic className="h-4 w-4 fill-current" />
      <svg viewBox="0 0 16 12" className="h-3 w-4" aria-hidden="true"><rect width="16" height="12" rx="1" fill="#1f72c8" /><path d="M2 3.500h12M2 6.500h12M4 9.500h8" stroke="#fff" strokeDasharray="2 1" /></svg>
      <svg viewBox="0 0 16 16" className="h-4 w-4" fill="#b4c3d6" aria-hidden="true"><circle cx="6" cy="4" r="3" /><path d="M0 13c0-8 12-8 12-2z" /><text x="5" y="15" fontSize="9" fontWeight="bold" fill="#8fa3bd">24</text></svg>
      <Shirt className="h-[14px] w-[14px] fill-current" />
      <Wrench className="h-[14px] w-[14px] fill-current" />
    </div>
  );
}

function NetWidget() {
  return (
    <div className="absolute top-12 left-[890px] flex h-[50px] w-[121px] items-center rounded-full border border-gray-200 bg-white pl-[5px] text-[11px] text-gray-600 shadow-md">
      <span className="flex h-[38px] w-[38px] items-center justify-center rounded-full bg-[#27c76f] text-white"><Wifi className="h-7 w-7" strokeWidth={3} /></span>
      <div className="ml-[7px] flex flex-col gap-1 leading-4">
        <span className="flex items-center gap-1">
          <svg viewBox="0 0 10 10" className="h-[10px] w-[10px]" fill="none" strokeWidth="1.500"><path d="M3.500 0v10L0 6" stroke="#1fbf6c" /><path d="M6.500 10V0L10 4" stroke="#f07820" /></svg>
          0.00K/s
        </span>
        <span className="flex items-center gap-1">
          <svg viewBox="0 0 10 12" className="h-3 w-[10px]"><path d="M1.500 2.500h7v9h-7zM3.500.5h3v2h-3z" fill="#fff" stroke="#1fbf6c" /><path d="M1 6h8v6H1z" fill="#1fbf6c" /></svg>
          0
        </span>
      </div>
    </div>
  );
}

export default function App() {
  return (
    <div className="relative flex h-screen flex-col overflow-hidden bg-[#f0f0f0] font-['Noto_Sans','Noto_Sans_CJK_SC',sans-serif] text-black">
      <TitleBar />
      <MenuBar />
      <MainToolbar />
      <main className="flex min-h-0 flex-1">
        <NavPanel />
        <div className="ml-1 flex min-w-0 flex-1 flex-col">
          <ComponentToolbar />
          <div className="mt-px mb-[3px] flex min-h-0 flex-1">
            <ComponentList />
            <PropertyPanel />
          </div>
        </div>
      </main>
      <StatusBar />
      <Taskbar />

      {/* Desktop overlays */}
      <ImeBar />
      <NetWidget />
      <div className="absolute -top-[29px] left-[1007px] flex h-12 w-12 items-end justify-center rounded-full border-2 border-green-700 bg-[#45c95c] pb-0.5 text-xs font-bold text-white shadow-md">61</div>

      {/* Highlight frames */}
      <div className="pointer-events-none absolute top-[140px] left-[242px] h-[51px] w-[151px] border-[7px] border-[#ff0000]" />
      <div className="pointer-events-none absolute top-[244px] left-[585px] h-[94px] w-[195px] border-[7px] border-[#ff0000]" />
      <div className="pointer-events-none absolute top-[488px] -left-[3px] h-[68px] w-[142px] border-[7px] border-[#ff0000]" />
    </div>
  );
}
